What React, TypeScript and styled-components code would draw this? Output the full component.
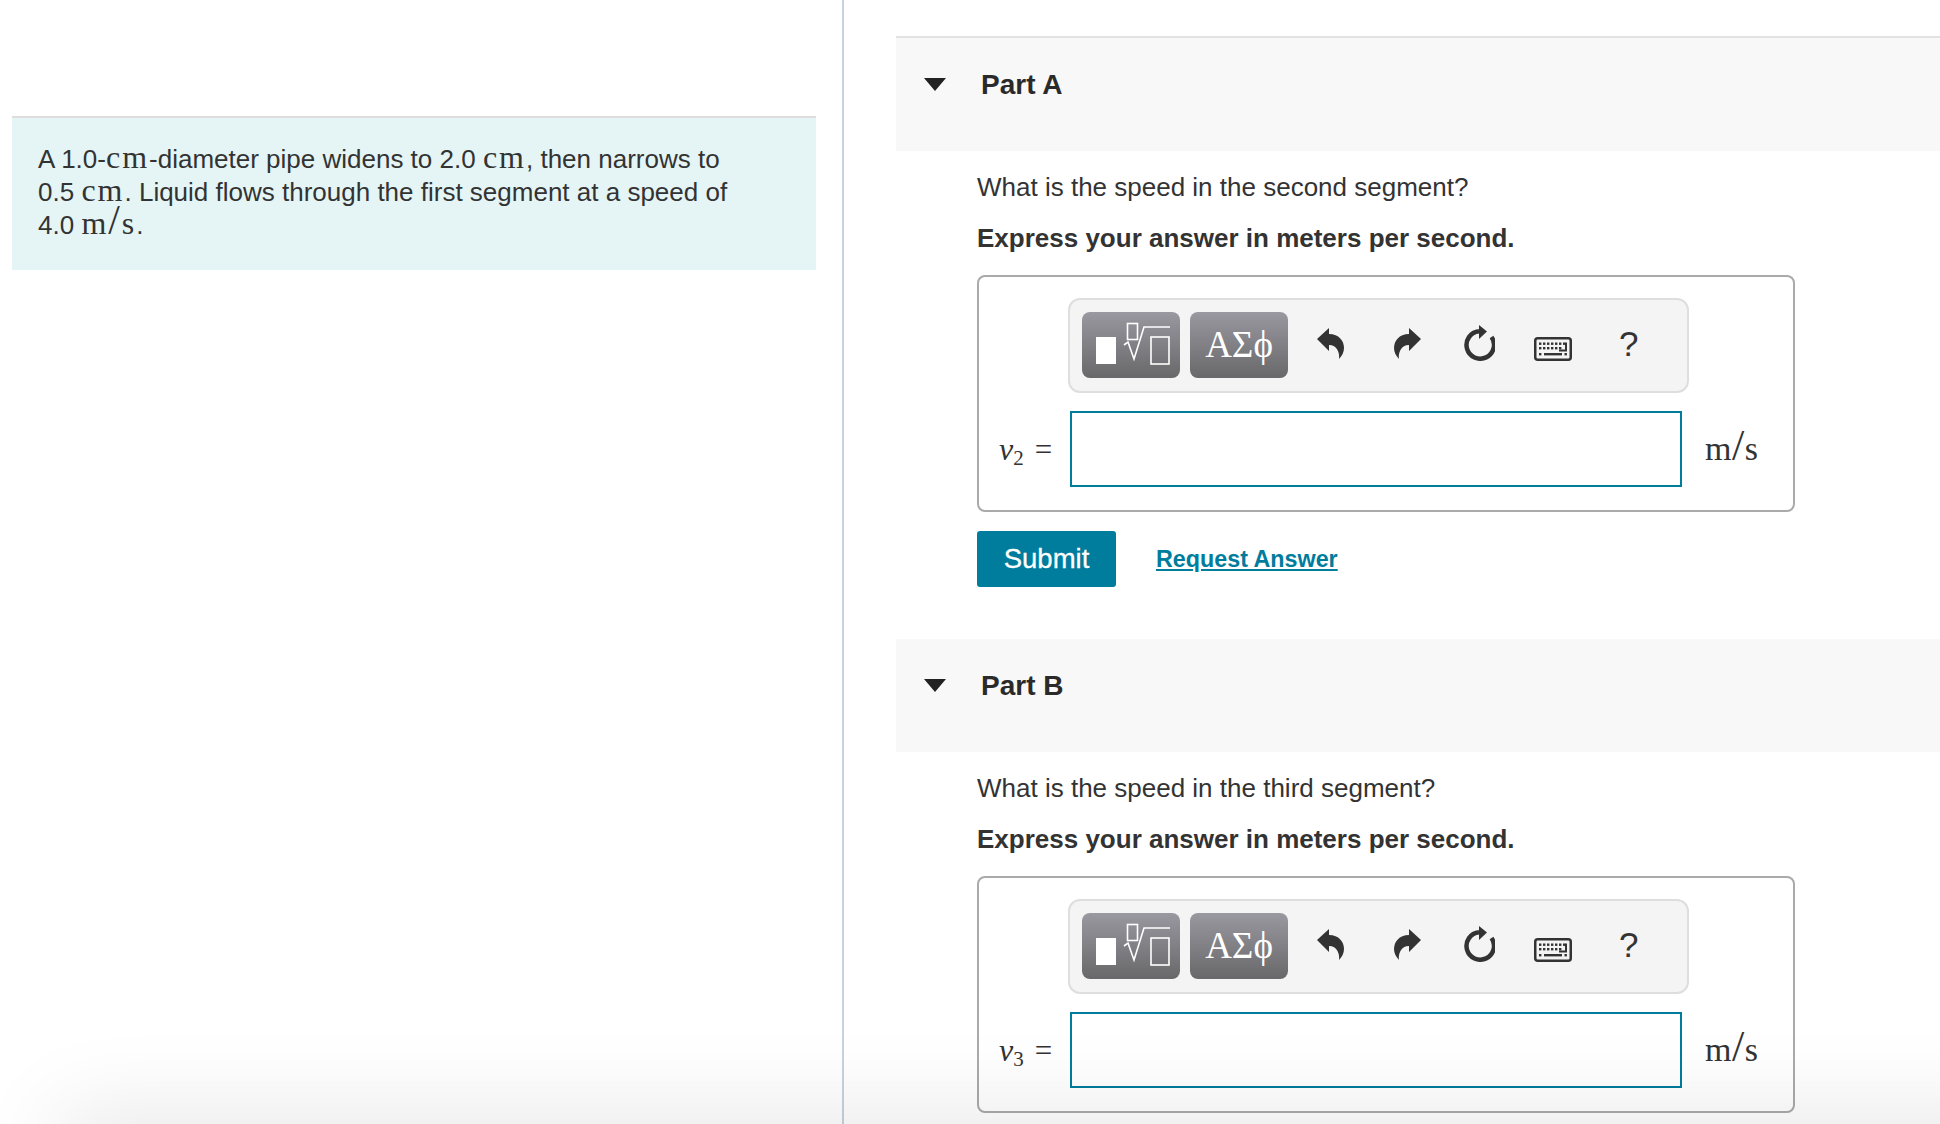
import React from "react";
import styled, { createGlobalStyle } from "styled-components";

const Global = createGlobalStyle`
  html, body { margin: 0; padding: 0; height: 1124px; overflow: hidden; background: #fff; }
  body { font-family: "Liberation Sans", Arial, sans-serif; color: #333; }
`;

const Page = styled.div`
  display: flex;
  height: 1124px;
  overflow: hidden;
`;

const LeftColumn = styled.aside`
  flex: 0 0 844px;
  box-sizing: border-box;
  height: 100%;
  padding: 116px 0 0 12px;
  border-right: 2px solid #c6d3df;
`;

const Statement = styled.div`
  box-sizing: border-box;
  width: 804px;
  height: 154px;
  padding: 25px 26px 0;
  background: #e5f5f6;
  border-top: 2px solid #dddddd;
  font-size: 26px;
  line-height: 33px;
  color: #333;
`;

const RightColumn = styled.main`
  flex: 1;
  min-width: 0;
  padding: 36px 0 0 52px;
`;

const PartHeader = styled.div<{ $ruled?: boolean }>`
  box-sizing: content-box;
  height: 113px;
  padding: 0 0 0 28px;
  background: #f8f8f8;
  border-top: ${(p) => (p.$ruled ? "2px solid #e2e2e2" : "none")};
  display: flex;
  align-items: flex-start;
`;

const Caret = styled.span`
  flex: none;
  width: 0;
  height: 0;
  margin-top: 40px;
  border-left: 11px solid transparent;
  border-right: 11px solid transparent;
  border-top: 13px solid #222;
`;

const PartTitle = styled.h2`
  margin: 30px 0 0 35px;
  font-size: 28px;
  line-height: 33px;
  font-weight: 700;
  color: #2a2a2a;
`;

const PartBody = styled.section`
  padding: 20px 0 52px 81px;
`;

const Question = styled.p`
  margin: 0 0 18px;
  font-size: 26px;
  line-height: 33px;
  color: #333;
`;

const Instruction = styled.p`
  margin: 0 0 20px;
  font-size: 26px;
  line-height: 33px;
  font-weight: 700;
  color: #333;
`;

const AnswerBox = styled.div`
  box-sizing: border-box;
  width: 818px;
  height: 237px;
  padding: 21px 0 0 20px;
  border: 2px solid #aaaaaa;
  border-radius: 8px;
`;

const Toolbar = styled.div`
  box-sizing: border-box;
  width: 621px;
  height: 95px;
  margin-left: 69px;
  padding: 12px 0 0 12px;
  background: #f4f4f4;
  border: 2px solid #dedede;
  border-radius: 12px;
  display: flex;
  align-items: flex-start;
`;

const ToolButton = styled.div<{ $gap?: number }>`
  flex: none;
  width: 98px;
  height: 66px;
  padding-bottom: 2px;
  box-sizing: border-box;
  margin-left: ${(p) => p.$gap ?? 0}px;
  border-radius: 8px;
  background: linear-gradient(#9a98a0, #68686a);
  color: #fff;
  display: flex;
  align-items: center;
  justify-content: center;
  font-family: "Liberation Serif", serif;
  font-size: 37px;
  line-height: 1;
`;

const RadicalButton = styled(ToolButton)`
  padding-bottom: 0;
`;

const ToolGlyph = styled.svg<{ $gap: number; $top: number; $flip?: boolean }>`
  flex: none;
  display: block;
  margin-left: ${(p) => p.$gap}px;
  margin-top: ${(p) => p.$top}px;
  transform: ${(p) => (p.$flip ? "scaleX(-1)" : "none")};
`;

const HelpMark = styled.span`
  flex: none;
  margin-left: 47px;
  margin-top: 12px;
  font-size: 35px;
  line-height: 40px;
  color: #333;
`;

const InputRow = styled.div`
  display: flex;
  align-items: center;
  margin-top: 18px;
`;

const Label = styled.div`
  flex: none;
  width: 71px;
  font-family: "Liberation Serif", serif;
  font-size: 31px;
  color: #333;
  white-space: nowrap;
`;

const LabelVar = styled.i`
  font-style: italic;
  font-size: 32px;
`;

const LabelSub = styled.sub`
  font-size: 21px;
  line-height: 0;
  vertical-align: -5px;
  margin-right: 11px;
`;

const AnswerField = styled.input`
  flex: none;
  box-sizing: border-box;
  width: 612px;
  height: 76px;
  padding: 0 10px;
  border: 2px solid #007c9c;
  border-radius: 0;
  outline: none;
  background: #fff;
`;

const Unit = styled.span`
  margin-left: 23px;
  font-family: "Liberation Serif", serif;
  font-size: 34px;
  line-height: 40px;
  letter-spacing: 0.5px;
  color: #333;
  white-space: nowrap;
`;

const Slash = styled.span`
  font-size: 1.3em;
  font-weight: 400;
  line-height: 0;
`;

const MathText = styled.span`
  font-family: "Liberation Serif", serif;
  font-size: 32px;
  line-height: 0;
  letter-spacing: 2px;
`;

const Actions = styled.div`
  display: flex;
  align-items: center;
  gap: 40px;
  margin-top: 19px;
`;

const SubmitButton = styled.button`
  width: 139px;
  height: 56px;
  padding: 0;
  border: none;
  border-radius: 3px;
  background: #007c9c;
  color: #fff;
  font-family: "Liberation Sans", Arial, sans-serif;
  font-size: 27.5px;
  -webkit-text-stroke: 0.3px #fff;
`;

const RequestLink = styled.a`
  font-size: 23.3px;
  font-weight: 700;
  color: #007c9c;
  text-decoration: underline;
`;

const BottomGlow = styled.div`
  position: fixed;
  left: 70px;
  right: -120px;
  bottom: -60px;
  height: 60px;
  box-shadow: 0 0 90px 10px rgba(0, 0, 0, 0.1);
  pointer-events: none;
`;

const ArrowIcon = ({ gap, flip }: { gap: number; flip?: boolean }) => (
  <ToolGlyph $gap={gap} $top={16} $flip={flip} width="27" height="31" viewBox="0 0 27 31">
    <path d="M0 11 L12 0 V6 C22 6 27 13 27 20 C27 24 25 28 22 31 C23 25 20 17 12 17 V23 Z" fill="#333" />
  </ToolGlyph>
);

const ReloadIcon = () => (
  <ToolGlyph $gap={42} $top={13} width="32" height="36" viewBox="0 0 32 36">
    <path d="M16 6.25 A13.75 13.75 0 1 0 28.5 12" fill="none" stroke="#333" strokeWidth="4.5" />
    <path d="M16 0 L24 6.5 L16 14 Z" fill="#333" />
  </ToolGlyph>
);

const KeyboardIcon = () => (
  <ToolGlyph $gap={39} $top={25} width="38" height="24" viewBox="0 0 38 24">
    <rect x="1.25" y="1.25" width="35.5" height="21.5" rx="2.5" fill="#f4f4f4" stroke="#333" strokeWidth="2.5" />
    <g fill="#333">
      {[5, 9, 13, 17, 21, 25, 29].map((x) => (
        <rect key={x} x={x} y="5.5" width="2.4" height="2.4" />
      ))}
      {[5, 9, 13, 17, 21, 25].map((x) => (
        <rect key={x} x={x} y="10" width="2.4" height="2.4" />
      ))}
      <path d="M31 5.5 h2 v9 h-8 v-2 h6 Z" />
      <rect x="5" y="16" width="2.4" height="2.4" />
      <rect x="10" y="16" width="18" height="2.4" />
      <rect x="30.5" y="16" width="2.4" height="2.4" />
    </g>
  </ToolGlyph>
);

const RadicalGlyph = () => (
  <svg width="98" height="66" viewBox="0 0 98 66">
    <rect x="14" y="25" width="20" height="27" fill="#fff" />
    <g fill="none" stroke="#fff" strokeWidth="1.6">
      <rect x="45.5" y="11.5" width="10" height="16" />
      <path d="M42 33 L46 30 L52 47 L62 15 H88" />
      <rect x="69" y="25" width="18" height="27" />
    </g>
  </svg>
);

const AnswerPanel = ({ sub }: { sub: string }) => (
  <AnswerBox>
    <Toolbar>
      <RadicalButton>
        <RadicalGlyph />
      </RadicalButton>
      <ToolButton $gap={10}>ΑΣϕ</ToolButton>
      <ArrowIcon gap={29} />
      <ArrowIcon gap={50} flip />
      <ReloadIcon />
      <KeyboardIcon />
      <HelpMark>?</HelpMark>
    </Toolbar>
    <InputRow>
      <Label>
        <LabelVar>v</LabelVar>
        <LabelSub>{sub}</LabelSub>=
      </Label>
      <AnswerField type="text" aria-label={`v${sub}`} />
      <Unit>
        m<Slash>/</Slash>s
      </Unit>
    </InputRow>
  </AnswerBox>
);

const Part = ({ title, question, sub, ruled, actions }: { title: string; question: string; sub: string; ruled?: boolean; actions?: boolean }) => (
  <>
    <PartHeader $ruled={ruled}>
      <Caret />
      <PartTitle>{title}</PartTitle>
    </PartHeader>
    <PartBody>
      <Question>{question}</Question>
      <Instruction>Express your answer in meters per second.</Instruction>
      <AnswerPanel sub={sub} />
      {actions && (
        <Actions>
          <SubmitButton>Submit</SubmitButton>
          <RequestLink href="#">Request Answer</RequestLink>
        </Actions>
      )}
    </PartBody>
  </>
);

export default function App() {
  return (
    <>
      <Global />
      <Page>
        <LeftColumn>
          <Statement>
            A 1.0-<MathText>cm</MathText>-diameter pipe widens to 2.0 <MathText>cm</MathText>, then narrows to
            <br />
            0.5 <MathText>cm</MathText>. Liquid flows through the first segment at a speed of
            <br />
            4.0 <MathText>m<Slash>/</Slash>s</MathText>.
          </Statement>
        </LeftColumn>
        <RightColumn>
          <Part ruled actions title="Part A" question="What is the speed in the second segment?" sub="2" />
          <Part title="Part B" question="What is the speed in the third segment?" sub="3" />
        </RightColumn>
      </Page>
      <BottomGlow />
    </>
  );
}
